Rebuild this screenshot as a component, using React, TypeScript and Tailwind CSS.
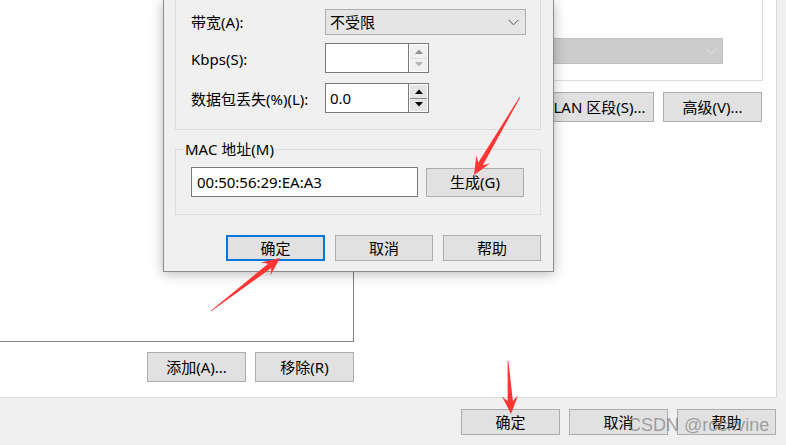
import React from "react";

type BtnProps = { children: React.ReactNode; className?: string; focused?: boolean };

const Btn = ({ children, className = "", focused = false }: BtnProps) => (
  <div
    className={`flex items-center justify-center bg-[#e1e1e1] text-[15px] leading-none text-black whitespace-nowrap ${
      focused ? "border-2 border-[#0078d7]" : "border border-[#adadad]"
    } ${className}`}
  >
    {children}
  </div>
);

const Chevron = ({ color }: { color: string }) => (
  <svg width="11" height="7" viewBox="0 0 11 7">
    <polyline points="0.5,0.8 5.5,5.8 10.5,0.8" fill="none" stroke={color} strokeWidth="1" />
  </svg>
);

const Tri = ({ up, color }: { up: boolean; color: string }) => (
  <svg width="8" height="5" viewBox="0 0 8 5">
    <polygon points={up ? "0,5 8,5 4,0.5" : "0,0 8,0 4,4.5"} fill={color} />
  </svg>
);

const Spin = ({ value, disabled }: { value: string; disabled: boolean }) => (
  <div className="flex w-[104px] h-[30px]">
    <div className="flex-1 bg-white border border-[#7a7a7a] border-r-0 flex items-center pl-[4px] text-[15px] leading-none">
      {value}
    </div>
    <div className="w-[21px] h-full border border-[#7a7a7a] bg-white flex flex-col p-[1px]">
      <div
        className={`flex-1 flex items-center justify-center border-b ${
          disabled ? "bg-[#f0f0f0] border-[#dcdcdc]" : "bg-[#e5e5e5] border-[#8a8a8a]"
        }`}
      >
        <Tri up color={disabled ? "#8f8f8f" : "#000000"} />
      </div>
      <div
        className={`flex-1 flex items-center justify-center ${
          disabled ? "bg-[#f0f0f0]" : "bg-[#e5e5e5]"
        }`}
      >
        <Tri up={false} color={disabled ? "#b5b5b5" : "#000000"} />
      </div>
    </div>
  </div>
);

function arrowPoints(
  tx: number,
  ty: number,
  px: number,
  py: number,
  headLen = 18,
  headW = 8,
  shaftW = 2.6
) {
  const dx = px - tx;
  const dy = py - ty;
  const L = Math.hypot(dx, dy);
  const ux = dx / L;
  const uy = dy / L;
  const nx = -uy;
  const ny = ux;
  const bx = px - ux * headLen;
  const by = py - uy * headLen;
  const mx = px - ux * headLen * 0.72;
  const my = py - uy * headLen * 0.72;
  const pts = [
    [tx + nx * 0.4, ty + ny * 0.4],
    [mx + nx * shaftW, my + ny * shaftW],
    [bx + nx * headW, by + ny * headW],
    [px, py],
    [bx - nx * headW, by - ny * headW],
    [mx - nx * shaftW, my - ny * shaftW],
    [tx - nx * 0.4, ty - ny * 0.4],
  ];
  return pts.map((p) => `${p[0].toFixed(1)},${p[1].toFixed(1)}`).join(" ");
}

export default function App() {
  return (
    <div className="relative w-[786px] h-[445px] overflow-hidden bg-[#f0f0f0] text-black font-['Noto_Sans','Noto_Sans_CJK_SC',sans-serif]">
      {/* main window content */}
      <div className="flex w-[777px] h-[398px] bg-white border-r border-b border-[#dadada]">
        {/* left column */}
        <div className="w-[354px] flex flex-col">
          <div className="h-[342px] border-r border-b border-[#828282] bg-white" />
          <div className="mt-[10px] flex justify-end gap-[9px]">
            <Btn className="w-[99px] h-[30px]">添加(A)...</Btn>
            <Btn className="w-[99px] h-[30px]">移除(R)</Btn>
          </div>
        </div>
        {/* right column */}
        <div className="flex-1 flex flex-col">
          <div className="ml-[10px] mr-[13px] h-[81px] border-r border-b border-[#dcdcdc] flex flex-col">
            <div className="mt-[38px] ml-[10px] mr-[39px] h-[26px] bg-[#cccccc] border border-[#bfbfbf] flex items-center justify-end pr-[5px]">
              <Chevron color="#e6e6e6" />
            </div>
          </div>
          <div className="mt-[11px] flex justify-end gap-[9px] pr-[14px]">
            <Btn className="w-[109px] h-[30px]">LAN 区段(S)...</Btn>
            <Btn className="w-[99px] h-[30px]">高级(V)...</Btn>
          </div>
        </div>
      </div>

      {/* bottom bar */}
      <div className="flex justify-end gap-[9px] pr-[10px] mt-[11px]">
        <Btn className="w-[99px] h-[26px]">确定</Btn>
        <Btn className="w-[99px] h-[26px]">取消</Btn>
        <Btn className="w-[99px] h-[26px]">帮助</Btn>
      </div>

      {/* dialog window on top */}
      <div className="absolute left-[163px] top-0 w-[391px] h-[272px] bg-[#f0f0f0] border-x border-b border-[#8c8c8c] shadow-[0_2px_12px_rgba(0,0,0,0.28)] pl-[11px] pr-[12px] flex flex-col">
        <div className="h-[130px] border-x border-b border-[#dcdcdc] pl-[15px] flex flex-col">
          <div className="mt-[9px] h-[26px] flex items-center">
            <div className="w-[134px] text-[15px] leading-none">带宽(A):</div>
            <div className="w-[201px] h-[26px] bg-[#e5e5e5] border border-[#adadad] flex items-center justify-between pl-[4px] pr-[6px] text-[15px] leading-none">
              <span>不受限</span>
              <Chevron color="#555555" />
            </div>
          </div>
          <div className="mt-[8px] h-[30px] flex items-center">
            <div className="w-[134px] text-[15px] leading-none pt-[3px]">Kbps(S):</div>
            <Spin value="" disabled />
          </div>
          <div className="mt-[10px] h-[30px] flex items-center">
            <div className="w-[134px] text-[15px] leading-none pt-[3px]">数据包丢失(%)(L):</div>
            <Spin value="0.0" disabled={false} />
          </div>
        </div>

        <div className="relative mt-[19px] h-[66px] border border-[#dcdcdc] pl-[15px] pt-[17px] flex gap-[8px]">
          <span className="absolute left-[8px] top-[-11px] px-[1px] bg-[#f0f0f0] text-[15px] leading-[20px]">
            MAC 地址(M)
          </span>
          <div className="w-[227px] h-[30px] bg-white border border-[#7a7a7a] flex items-center pl-[5px] text-[15px] leading-none">
            00:50:56:29:EA:A3
          </div>
          <Btn className="w-[98px] h-[29px] mt-[1px]">生成(G)</Btn>
        </div>

        <div className="mt-[20px] flex justify-end gap-[10px]">
          <Btn focused className="w-[99px] h-[26px]">确定</Btn>
          <Btn className="w-[98px] h-[26px]">取消</Btn>
          <Btn className="w-[98px] h-[26px]">帮助</Btn>
        </div>
      </div>

      {/* watermark */}
      <div className="absolute left-[628px] top-[414px] text-[18px] leading-[22px] text-[rgba(110,110,110,0.6)] font-['Liberation_Sans',sans-serif] whitespace-nowrap pointer-events-none">
        CSDN @rockvine
      </div>

      {/* red annotation arrows */}
      <svg className="absolute left-0 top-0 pointer-events-none" width="786" height="445" viewBox="0 0 786 445">
        <polygon points={arrowPoints(520, 97, 474, 175)} fill="#ff3535" />
        <polygon points={arrowPoints(211, 311, 280, 258)} fill="#ff3535" />
        <polygon points={arrowPoints(508, 361, 511, 414)} fill="#ff3535" />
      </svg>
    </div>
  );
}
